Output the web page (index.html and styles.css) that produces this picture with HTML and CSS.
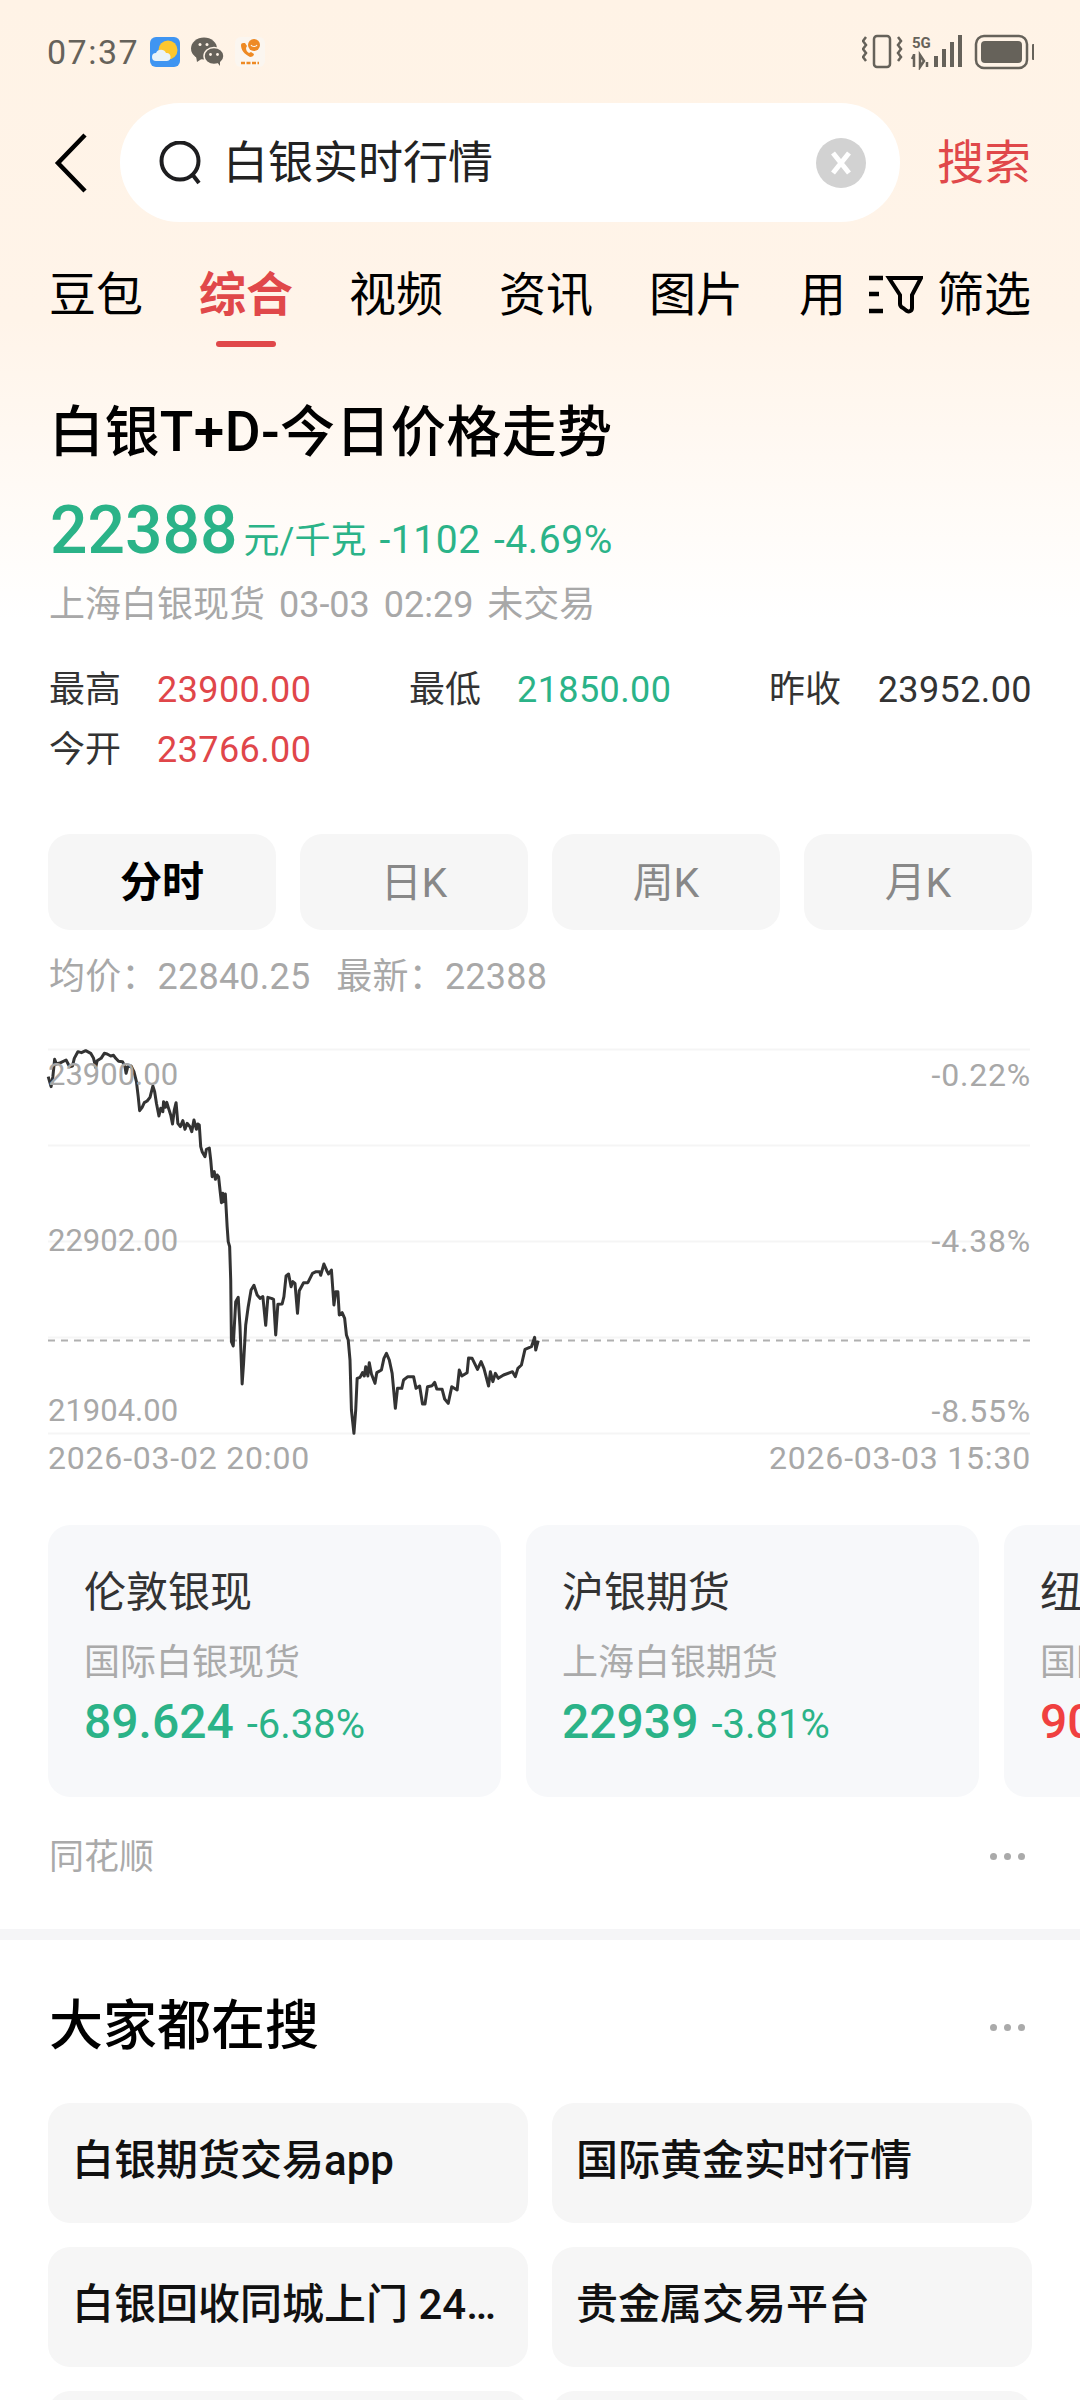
FILE: index.html
```html
<!DOCTYPE html>
<html>
<head>
	<title>白银实时行情</title>
	<meta charset="utf-8"/>
	<link rel="stylesheet" href="styles.css">
</head>
<body>
<div class="page">
	<div class="status">
		<span class="time">07:37</span>
		<svg class="app" width="30" height="30" viewBox="0 0 30 30">
			<rect width="30" height="30" rx="6" fill="#3f95f2"/>
			<circle cx="18" cy="13" r="9.500" fill="#fdc72e"/>
			<path d="M6 24a4 4 0 0 1 0-8 5.500 5.500 0 0 1 10 0 4 4 0 0 1 1 8z" fill="#eaf3f8"/>
		</svg>
		<svg class="app wechat" width="33" height="30" viewBox="0 0 33 30">
			<ellipse cx="13" cy="11.500" rx="13" ry="11" fill="#66625a"/>
			<path d="M5 19l1 6 6-4z" fill="#66625a"/>
			<ellipse cx="23" cy="19" rx="10" ry="8.500" fill="#66625a" stroke="#fff3e6" stroke-width="1.500"/>
			<path d="M26 25l3 4 0-6z" fill="#66625a"/>
			<circle cx="19.500" cy="17.500" r="1.400" fill="#fff3e6"/>
			<circle cx="26.500" cy="17.500" r="1.400" fill="#fff3e6"/>
			<circle cx="9" cy="7.500" r="1.500" fill="#fff3e6"/>
			<circle cx="16" cy="7.500" r="1.500" fill="#fff3e6"/>
		</svg>
		<svg class="app xiao" width="30" height="30" viewBox="0 0 30 30">
			<rect width="30" height="30" rx="6" fill="#fbf6f0"/>
			<path d="M6 8c0 5 3 9 9 12 2 0 4-1 4-3l-3-2-2 1c-2-1-3-3-3-5l1-2-2-3c-2 0-4 0-4 2z" fill="#ee8a24"/>
			<circle cx="19" cy="8" r="6" fill="#ee8a24"/>
			<path d="M16 8c1 2 5 2 6 0" stroke="#fbf6f0" stroke-width="1.200" fill="none"/>
			<path d="M6 26h18" stroke="#ee8a24" stroke-width="2.500" stroke-dasharray="4 1.500"/>
		</svg>
		<svg class="sys" width="172" height="36" viewBox="0 0 172 36">
			<path d="M4 3l-3 4 3 4-3 4 3 4-3 4 3 4M36 3l3 4-3 4 3 4-3 4 3 4-3 4" fill="none" stroke="#66625a" stroke-width="2.500"/>
			<rect x="12" y="2" width="16" height="31" rx="3" fill="none" stroke="#66625a" stroke-width="2.500"/>
			<text class="net" x="50" y="14">5G</text>
			<path d="M52 20v13M50 25l2-4M58 21v12l4-6zM65 28v5" fill="none" stroke="#66625a" stroke-width="2.500"/>
			<rect x="72" y="22" width="4" height="11" fill="#66625a"/>
			<rect x="80" y="15" width="4" height="18" fill="#66625a"/>
			<rect x="88" y="8" width="4" height="25" fill="#66625a"/>
			<rect x="96" y="1" width="4" height="32" fill="#66625a"/>
			<rect x="114" y="2" width="51" height="32" rx="8" fill="none" stroke="#66625a" stroke-width="2.500"/>
			<rect x="119" y="7" width="41" height="22" rx="4" fill="#66625a"/>
			<rect x="170" y="10" width="3" height="16" rx="1" fill="#66625a"/>
		</svg>
	</div>

	<div class="searchbar">
		<svg class="back" width="34" height="60" viewBox="0 0 34 60">
			<path d="M31 2L4 30l27 28" fill="none" stroke="#000" stroke-width="4.500"/>
		</svg>
		<div class="input">
			<svg width="44" height="44" viewBox="0 0 44 44">
				<circle cx="21" cy="20" r="18.500" fill="none" stroke="#1d1d1f" stroke-width="4"/>
				<path d="M33 33l7 9" stroke="#1d1d1f" stroke-width="4" fill="none"/>
			</svg>
			<span class="query">白银实时行情</span>
			<svg class="clear" width="50" height="50" viewBox="0 0 50 50">
				<circle cx="25" cy="25" r="25" fill="#d2d2d2"/>
				<path d="M17 15l16 20M33 15L17 35" stroke="#fff" stroke-width="5" fill="none"/>
			</svg>
		</div>
		<span class="go">搜索</span>
	</div>

	<div class="tabs">
		<div class="tablist">
			<span>豆包</span>
			<span class="active">综合</span>
			<span>视频</span>
			<span>资讯</span>
			<span>图片</span>
			<span>用</span>
		</div>
		<div class="filter">
			<svg width="54" height="40" viewBox="0 0 54 40">
				<path d="M0 3h14M0 19h10M0 36h14" stroke="#000" stroke-width="4.500" fill="none"/>
				<path d="M20 3H52L43 20V33c0 3-3 4-5 3l-4-3c-2-1-3-2-3-4V20z" fill="none" stroke="#000" stroke-width="4"/>
			</svg>
			<span>筛选</span>
		</div>
	</div>

	<div class="info">
		<h1>白银T+D-今日价格走势</h1>
		<div class="price">
			<span class="big">22388</span>
			<span>元/千克</span>
			<span class="num">-1102</span>
			<span class="num">-4.69%</span>
		</div>
		<div class="sub">上海白银现货 03-03 02:29 未交易</div>
		<div class="stats">
			<div class="stat"><span>最高</span><b class="red">23900.00</b></div>
			<div class="stat"><span>最低</span><b class="green">21850.00</b></div>
			<div class="stat last"><span>昨收</span><b>23952.00</b></div>
			<div class="stat"><span>今开</span><b class="red">23766.00</b></div>
		</div>
		<div class="periods">
			<div class="period on">分时</div>
			<div class="period">日K</div>
			<div class="period">周K</div>
			<div class="period">月K</div>
		</div>
		<div class="avg"><span>均价：22840.25</span><span>最新：22388</span></div>
	</div>

	<div class="chart">
		<svg class="lines" width="1080" height="460" viewBox="0 0 1080 460">
			<path d="M48 29.500H1030M48 125.500H1030M48 221.500H1030M48 317.500H1030M48 413.500H1030" stroke="#f5f5f5" stroke-width="2" fill="none"/>
			<path d="M48 320.500H1030" stroke="#b0b0b0" stroke-width="2" stroke-dasharray="7 6" fill="none"/>
			<svg x="0" y="0" width="560" height="460" viewBox="0 0 1568 1380" preserveAspectRatio="none">
				<polyline vector-effect="non-scaling-stroke" fill="none" stroke="#333" stroke-width="3" stroke-linejoin="round" points="135,170 143,200 148,170 153,118 158,132 170,128 185,120 195,140 203,138 208,115 218,95 228,98 240,92 254,100 262,115 268,142 272,122 283,115 292,100 300,102 310,108 318,106 324,115 332,124 343,125 350,140 353,160 358,140 367,138 375,155 382,185 387,230 391,272 398,262 404,248 412,243 420,232 428,198 433,215 438,250 445,288 450,265 456,275 458,245 463,262 467,247 472,265 478,285 483,312 488,270 493,248 498,310 505,320 512,302 518,328 524,310 532,320 537,335 543,300 550,328 554,312 558,315 562,380 566,395 574,410 578,388 586,384 590,420 594,470 600,455 603,478 608,465 612,470 616,510 620,548 624,520 626,545 631,522 636,620 639,665 643,680 646,780 648,965 653,978 660,845 667,832 672,920 678,1092 682,1030 688,915 695,860 703,810 711,796 720,825 728,835 736,830 744,916 750,832 760,835 766,838 772,945 778,853 790,852 795,830 801,768 808,762 815,800 820,785 826,790 833,880 838,812 850,788 862,788 875,760 885,755 895,755 898,766 907,732 915,752 920,762 928,750 935,855 940,815 946,815 950,885 958,878 965,895 970,945 975,960 980,1020 984,1170 991,1240 996,1170 1000,1075 1008,1072 1015,1058 1020,1068 1024,1040 1030,1068 1034,1028 1040,1062 1050,1090 1055,1058 1068,1050 1075,1015 1082,1000 1090,1020 1098,1060 1107,1165 1113,1105 1125,1105 1130,1080 1142,1070 1158,1070 1165,1105 1175,1098 1183,1152 1190,1152 1197,1100 1210,1097 1217,1087 1223,1107 1238,1108 1245,1137 1255,1150 1265,1100 1280,1110 1286,1050 1293,1068 1308,1058 1312,1014 1322,1015 1337,1048 1347,1025 1355,1045 1368,1098 1373,1055 1380,1085 1387,1060 1395,1075 1410,1065 1435,1055 1443,1070 1450,1045 1460,1035 1470,988 1488,980 1497,952 1500,990 1507,962"/>
			</svg>
		</svg>
		<span class="tick ly1">23900.00</span>
		<span class="tick ly2">22902.00</span>
		<span class="tick ly3">21904.00</span>
		<span class="tick ry1">-0.22%</span>
		<span class="tick ry2">-4.38%</span>
		<span class="tick ry3">-8.55%</span>
		<span class="tick dl">2026-03-02 20:00</span>
		<span class="tick dr">2026-03-03 15:30</span>
	</div>

	<div class="cards">
		<div class="card">
			<div class="cname">伦敦银现</div>
			<div class="cdesc">国际白银现货</div>
			<div class="cval"><b>89.624</b><span>-6.38%</span></div>
		</div>
		<div class="card">
			<div class="cname">沪银期货</div>
			<div class="cdesc">上海白银期货</div>
			<div class="cval"><b>22939</b><span>-3.81%</span></div>
		</div>
		<div class="card">
			<div class="cname">纽约银</div>
			<div class="cdesc">国际白银期货</div>
			<div class="cval up"><b>90.1</b></div>
		</div>
	</div>

	<div class="source">
		<span>同花顺</span>
		<div class="dots"><i></i><i></i><i></i></div>
	</div>

	<div class="sep"></div>

	<div class="hot">
		<h2>大家都在搜</h2>
		<div class="dots"><i></i><i></i><i></i></div>
	</div>
	<div class="grid">
		<div class="item">白银期货交易app</div>
		<div class="item">国际黄金实时行情</div>
		<div class="item">白银回收同城上门 24…</div>
		<div class="item">贵金属交易平台</div>
		<div class="item"></div>
		<div class="item"></div>
	</div>
</div>
</body>
</html>
```

FILE: styles.css
```css
*{
	box-sizing: border-box;
}
html,body{
	margin: 0;
	padding: 0;
}
body{
	font-family: Roboto, "Noto Sans CJK SC", sans-serif;
	background-color: #fff;
}
.page{
	width: 1080px;
	height: 2400px;
	overflow: hidden;
	background: linear-gradient(#fff3e6 0px, #fff4e9 320px, #fff 620px);
}
.status{
	height: 103px;
	padding: 0 47px;
	display: flex;
	align-items: center;
	color: #66625a;
}
.time{
	font-size: 34px;
	letter-spacing: 1.500px;
	width: 103px;
}
.app{
	flex: none;
}
.wechat{
	margin-left: 11px;
}
.xiao{
	margin-left: 11px;
}
.sys{
	margin-left: auto;
	margin-right: -1px;
	flex: none;
}
.net{
	font-family: Roboto, sans-serif;
	font-size: 15px;
	font-weight: 700;
	fill: #66625a;
}
.searchbar{
	height: 119px;
	padding: 0 49px 0 54px;
	display: flex;
	align-items: center;
}
.back{
	flex: none;
	width: 34px;
}
.input{
	margin-left: 32px;
	width: 780px;
	height: 119px;
	border-radius: 60px;
	background-color: #fff;
	padding: 0 34px 0 39px;
	display: flex;
	align-items: center;
}
.query{
	margin-left: 20px;
	padding-bottom: 6px;
	font-size: 45px;
	color: #222;
}
.clear{
	margin-left: auto;
}
.go{
	margin-left: auto;
	padding-bottom: 8px;
	font-size: 47px;
	color: #e0484a;
}
.tabs{
	height: 125px;
	padding: 43px 49px 0;
	display: flex;
	justify-content: space-between;
	align-items: flex-start;
	font-size: 47px;
	color: #000;
	position: relative;
}
.tablist{
	display: flex;
	gap: 56px;
	white-space: nowrap;
	line-height: 60px;
}
.tablist .active{
	color: #e0484a;
	font-weight: 700;
}
.tabs::after{
	content: "";
	position: absolute;
	left: 216px;
	bottom: 0;
	width: 60px;
	height: 6px;
	border-radius: 3px;
	background-color: #e0484a;
}
.filter{
	display: flex;
	align-items: center;
	gap: 14px;
	line-height: 60px;
}
.info{
	padding: 0 48px 0 49px;
}
h1{
	margin: 50px 0 0;
	font-size: 55px;
	line-height: 70px;
	font-weight: 500;
	letter-spacing: .4px;
	color: #000;
}
.price{
	margin-top: 24px;
	height: 80px;
	display: flex;
	align-items: baseline;
	gap: 13px;
	font-size: 36px;
	color: #2bb388;
}
.price .big{
	font-size: 66px;
	font-weight: 500;
	line-height: 80px;
	margin-right: -7px;
	margin-left: 1px;
}
.price .num{
	font-size: 39px;
	letter-spacing: .6px;
}
.sub{
	margin-top: 9px;
	font-size: 36px;
	line-height: 50px;
	word-spacing: 5px;
	color: #a8a8a8;
}
.stats{
	margin-top: 30px;
	display: grid;
	grid-template-columns: 360px 360px 1fr;
	font-size: 36px;
	line-height: 60px;
	color: #333;
}
.stat{
	display: flex;
	gap: 36px;
}
.stat b{
	font-weight: 400;
	letter-spacing: .4px;
}
.stat.last{
	justify-content: space-between;
}
.red{
	color: #e0464a;
}
.green{
	color: #2bb388;
}
.periods{
	margin-top: 54px;
	margin-left: -1px;
	display: grid;
	grid-template-columns: repeat(4, 1fr);
	gap: 24px;
}
.period{
	height: 96px;
	border-radius: 22px;
	background-color: #f6f6f6;
	color: #888;
	font-size: 41px;
	padding-bottom: 7px;
	display: flex;
	align-items: center;
	justify-content: center;
}
.period.on{
	color: #000;
	font-weight: 700;
	font-size: 42px;
}
.avg{
	margin-top: 22px;
	display: flex;
	gap: 26px;
	font-size: 36px;
	line-height: 50px;
	letter-spacing: .2px;
	color: #a8a8a8;
}
.chart{
	margin-top: 18px;
	height: 460px;
	position: relative;
}
.lines{
	display: block;
}
.tick{
	position: absolute;
	font-size: 31px;
	line-height: 40px;
	color: #a8a8a8;
}
.ry1,.ry2,.ry3,.dl,.dr{
	font-size: 32px;
	letter-spacing: .8px;
}
.ly1,.ly2,.ly3,.dl{
	left: 48px;
}
.ry1,.ry2,.ry3,.dr{
	right: 49px;
}
.ly1,.ry1{
	top: 35px;
}
.ly2,.ry2{
	top: 201px;
}
.ly3,.ry3{
	top: 371px;
}
.dl,.dr{
	top: 418px;
}
.cards{
	margin-top: 45px;
	padding-left: 48px;
	display: flex;
	gap: 25px;
	width: 1600px;
}
.card{
	width: 453px;
	height: 272px;
	flex: none;
	border-radius: 22px;
	background-color: #f7f8fa;
	padding: 43px 0 0 36px;
}
.cname{
	font-size: 42px;
	line-height: 50px;
	color: #333;
}
.cdesc{
	margin-top: 22px;
	font-size: 36px;
	line-height: 46px;
	color: #aaa;
}
.cval{
	margin-top: 6px;
	display: flex;
	align-items: baseline;
	gap: 13px;
	font-size: 40px;
	line-height: 60px;
	color: #2bb388;
}
.cval b{
	font-size: 48px;
	font-weight: 500;
}
.cval.up{
	color: #f04040;
}
.source{
	margin-top: 34px;
	height: 50px;
	padding: 0 55px 0 49px;
	display: flex;
	justify-content: space-between;
	align-items: center;
	font-size: 35px;
	color: #aaa;
}
.source span{
	padding-bottom: 5px;
}
.dots{
	display: flex;
	gap: 7px;
}
.dots i{
	display: block;
	width: 7px;
	height: 7px;
	border-radius: 50%;
	background-color: #aaa;
}
.sep{
	margin-top: 48px;
	height: 11px;
	background-color: #f5f5f7;
}
.hot{
	margin-top: 52px;
	height: 70px;
	padding: 0 55px 0 49px;
	display: flex;
	justify-content: space-between;
	align-items: center;
}
h2{
	margin: 0;
	font-size: 54px;
	line-height: 70px;
	font-weight: 500;
	color: #000;
}
.grid{
	margin-top: 41px;
	padding: 0 48px;
	display: grid;
	grid-template-columns: repeat(2, 1fr);
	gap: 24px;
}
.item{
	height: 120px;
	border-radius: 22px;
	background-color: #f6f6f6;
	padding-left: 24px;
	font-size: 42px;
	font-weight: 500;
	line-height: 116px;
	color: #111;
	white-space: nowrap;
	overflow: hidden;
}
```
